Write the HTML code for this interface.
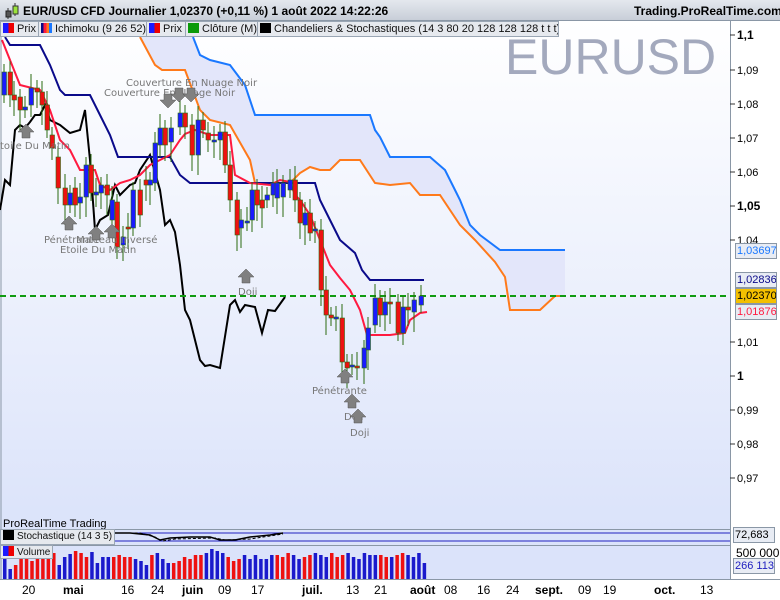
<!DOCTYPE html>
<html><head><meta charset="utf-8"><style>
*{margin:0;padding:0;box-sizing:border-box}
body{width:780px;height:600px;overflow:hidden;background:#fff;font-family:"Liberation Sans",sans-serif;position:relative}
.title{position:absolute;left:0;top:0;width:780px;height:21px;background:linear-gradient(#e4e8ee,#c8ced8);border-bottom:1px solid #8a97a6}
.title b{position:absolute;top:4px;font-size:12px;color:#000}
.leg{position:absolute;top:21px;height:16px;background:#e6e9ee;border:1px solid #9aa6b4;font-size:11px;line-height:14px;padding:0 2px;white-space:nowrap;overflow:hidden;color:#111}
.legs{position:absolute;height:16px;background:#e6e9ee;border:1px solid #9aa6b4;font-size:10px;line-height:14px;padding:0 2px;white-space:nowrap;color:#111}
.sw{display:inline-block;width:11px;height:10px;vertical-align:-1px;margin-right:3px}
.pl{position:absolute;left:735px;width:42px;height:16px;border:1px solid #8a97a6;background:#e8ecf4;font-size:11px;line-height:14px;padding-left:1px;overflow:hidden}
</style></head><body>
<div class="title">
<svg style="position:absolute;left:3px;top:2px" width="16" height="18"><line x1="5" y1="6" x2="5" y2="17" stroke="#333"/><rect x="3" y="9" width="5" height="6" fill="#555" stroke="#222"/><line x1="12" y1="1" x2="12" y2="14" stroke="#333"/><rect x="10" y="4" width="5" height="8" fill="#9be33c" stroke="#333"/></svg>
<b style="left:23px">EUR/USD CFD Journalier 1,02370 (+0,11 %) 1 août 2022 14:22:26</b>
<b style="left:634px">Trading.ProRealTime.com</b>
</div>
<svg style="position:absolute;left:0;top:21px" width="780" height="579">
<defs><linearGradient id="bg" x1="0" y1="0" x2="0" y2="1"><stop offset="0" stop-color="#ffffff"/><stop offset="1" stop-color="#dbe3fa"/></linearGradient></defs>
<rect x="0" y="0" width="730" height="508" fill="url(#bg)"/>
<rect x="0" y="508" width="730" height="50" fill="#dbe3fa"/>
<rect x="0" y="558" width="780" height="21" fill="#fff"/>
<rect x="730" y="0" width="50" height="558" fill="#fff"/>
<line x1="730.5" y1="0" x2="730.5" y2="558" stroke="#8a97a6"/>
<line x1="1" y1="0" x2="1" y2="558" stroke="#8a97a6"/>
<line x1="0" y1="508.5" x2="730" y2="508.5" stroke="#8a97a6"/>
<line x1="0" y1="524.5" x2="730" y2="524.5" stroke="#8a97a6"/>
<line x1="0" y1="558.5" x2="780" y2="558.5" stroke="#8a97a6"/>
<g transform="translate(0,-21)">
<text x="505" y="74" font-size="50" fill="#a3a9bd" font-family="Liberation Sans">EURUSD</text>
<polygon fill="#e3e6fa" points="140,37 155,65 162,70 185,70 200,110 210,120 230,125 250,160 255,183 290,183 300,173 310,167 320,170 330,170 340,160 360,160 375,183 390,185 410,183 420,195 440,195 460,225 475,240 495,262 505,277 510,310 540,310 555,296 565,296 565,250 500,250 480,235 470,225 460,200 455,190 445,170 430,157 390,157 380,137 375,130 370,115 258,115 255,115 245,85 230,65 210,60 200,55 193,37"/>
<polyline fill="none" stroke="#ff7a1a" stroke-width="2" points="140,37 155,65 162,70 185,70 200,110 210,120 230,125 250,160 255,183 290,183 300,173 310,167 320,170 330,170 340,160 360,160 375,183 390,185 410,183 420,195 440,195 460,225 475,240 495,262 505,277 510,310 540,310 555,296 565,296"/>
<polyline fill="none" stroke="#1a78ff" stroke-width="2" points="193,37 200,55 210,60 230,65 245,85 255,115 370,115 375,130 380,137 390,157 430,157 445,170 455,190 460,200 470,225 480,235 500,250 565,250"/>
<polyline fill="none" stroke="#000" stroke-width="2" points="0,210 5,180 10,185 15,130 20,125 25,128 30,122 35,115 40,115 45,105 50,120 60,125 70,133 80,130 85,110 90,160 95,230 100,220 108,215 115,185 120,195 130,185 135,183 140,170 150,155 160,190 165,225 170,220 175,232 180,265 185,310 190,320 200,360 205,366 210,365 220,368 230,305 235,300 240,312 245,305 255,307 262,333 268,310 275,311 285,297"/>
<polyline fill="none" stroke="#0a0a8a" stroke-width="2" points="5,37 10,45 40,45 50,65 60,90 65,95 90,95 100,115 110,135 118,157 170,157 180,175 190,183 315,183 320,200 330,220 340,240 355,253 362,270 370,280 424,280"/>
<polyline fill="none" stroke="#ff1a40" stroke-width="2" points="2,40 20,85 40,90 50,110 60,140 70,150 80,170 95,170 100,185 110,190 120,183 130,180 140,175 150,165 160,160 170,155 180,140 185,134 195,130 210,135 230,135 235,175 250,183 270,185 280,180 290,182 295,195 300,200 310,215 320,240 330,265 340,278 350,290 360,310 367,335 375,335 390,335 405,333 410,320 420,313 427,312"/>
<line x1="0" y1="296" x2="730" y2="296" stroke="#109a10" stroke-width="2" stroke-dasharray="6,4"/>
<g id="candles"></g>
<g fill="#777" font-family="DejaVu Sans,sans-serif" font-size="10">
<text x="126" y="86">Couverture En Nuage Noir</text>
<text x="104" y="96">Couverture En Nuage Noir</text>
<text x="0" y="149">toile Du Matin</text>
<text x="44" y="243">Pénétrante</text>
<text x="76" y="243">Marteau Inversé</text>
<text x="60" y="253">Etoile Du Matin</text>
<text x="238" y="295">Doji</text>
<text x="312" y="394">Pénétrante</text>
<text x="344" y="420">Doji</text>
<text x="350" y="436">Doji</text>
</g>
<g fill="#808080" stroke="#555" stroke-width=".5">
<path d="M60,132 l8,-8 l8,8 h-4 v6 h-8 v-6z" transform="translate(-42,0)"/>
<path d="M60,224 l8,-8 l8,8 h-4 v6 h-8 v-6z" transform="translate(1,0)"/>
<path d="M60,234 l8,-8 l8,8 h-4 v6 h-8 v-6z" transform="translate(28,0)"/>
<path d="M60,224 l8,-8 l8,8 h-4 v6 h-8 v-6z" transform="translate(44,8)"/>
<path d="M60,277 l8,-8 l8,8 h-4 v6 h-8 v-6z" transform="translate(178,0)"/>
<path d="M60,377 l8,-8 l8,8 h-4 v6 h-8 v-6z" transform="translate(277,0)"/>
<path d="M60,402 l8,-8 l8,8 h-4 v6 h-8 v-6z" transform="translate(284,0)"/>
<path d="M60,417 l8,-8 l8,8 h-4 v6 h-8 v-6z" transform="translate(290,0)"/>
<path d="M160,100 l8,8 l8,-8 h-4 v-6 h-8 v6z"/>
<path d="M171,94 l8,8 l8,-8 h-4 v-6 h-8 v6z"/>
<path d="M183,94 l8,8 l8,-8 h-4 v-6 h-8 v6z"/>
</g>
<g font-size="11" fill="#000">
<text x="737" y="39" font-weight="bold" font-size="12">1,1</text>
<text x="737" y="74">1,09</text><text x="737" y="108">1,08</text><text x="737" y="142">1,07</text>
<text x="737" y="176">1,06</text><text x="737" y="210" font-weight="bold" font-size="12">1,05</text>
<text x="737" y="244">1,04</text><text x="737" y="346">1,01</text>
<text x="737" y="380" font-weight="bold" font-size="12">1</text>
<text x="737" y="414">0,99</text><text x="737" y="448">0,98</text><text x="737" y="482">0,97</text>
</g>
<g stroke="#333"><line x1="730" y1="35" x2="735" y2="35"/><line x1="730" y1="70" x2="735" y2="70"/><line x1="730" y1="104" x2="735" y2="104"/><line x1="730" y1="138" x2="735" y2="138"/><line x1="730" y1="172" x2="735" y2="172"/><line x1="730" y1="206" x2="735" y2="206"/><line x1="730" y1="240" x2="735" y2="240"/><line x1="730" y1="342" x2="735" y2="342"/><line x1="730" y1="376" x2="735" y2="376"/><line x1="730" y1="410" x2="735" y2="410"/><line x1="730" y1="444" x2="735" y2="444"/><line x1="730" y1="478" x2="735" y2="478"/></g>
<line x1="84" y1="533" x2="730" y2="533" stroke="#2020c0"/>
<line x1="84" y1="541" x2="730" y2="541" stroke="#2020c0"/>
<polyline fill="none" stroke="#000" stroke-width="1.5" points="86,541 100,535 110,533 130,533 150,535 160,540 170,538 190,537 210,537 220,540 235,540 250,537 270,535 283,533"/>
<polyline fill="none" stroke="#000" stroke-dasharray="3,2" points="86,542 100,537 115,533 140,533 155,537 162,541 175,539 215,538 225,540 250,539 270,536 283,534"/>
<g id="vol"></g>
<g font-size="12" fill="#000">
<text x="736" y="557" font-size="12">500 000</text>
<text x="22" y="594">20</text><text x="63" y="594" font-weight="bold">mai</text><text x="121" y="594">16</text><text x="151" y="594">24</text>
<text x="182" y="594" font-weight="bold">juin</text><text x="218" y="594">09</text><text x="251" y="594">17</text>
<text x="302" y="594" font-weight="bold">juil.</text><text x="346" y="594">13</text><text x="374" y="594">21</text>
<text x="410" y="594" font-weight="bold">août</text><text x="444" y="594">08</text><text x="477" y="594">16</text><text x="506" y="594">24</text>
<text x="535" y="594" font-weight="bold">sept.</text><text x="578" y="594">09</text><text x="603" y="594">19</text>
<text x="654" y="594" font-weight="bold">oct.</text><text x="700" y="594">13</text>
</g>
<text x="3" y="527" font-size="11" fill="#000">ProRealTime Trading</text>
</g>
</svg>
<div class="leg" style="left:0;width:39px"><span class="sw" style="background:linear-gradient(90deg,#1a1aff 50%,#e00 50%)"></span>Prix</div>
<div class="leg" style="left:38px;width:109px"><span class="sw" style="background:linear-gradient(90deg,#0a0a8a 25%,#ff1a40 25%,#ff1a40 50%,#ff7a1a 50%,#ff7a1a 75%,#1a78ff 75%)"></span>Ichimoku (9 26 52)</div>
<div class="leg" style="left:146px;width:40px"><span class="sw" style="background:linear-gradient(90deg,#1a1aff 50%,#e00 50%)"></span>Prix</div>
<div class="leg" style="left:185px;width:73px"><span class="sw" style="background:#0a9a0a"></span>Clôture (M)</div>
<div class="leg" style="left:257px;width:302px"><span class="sw" style="background:#000"></span>Chandeliers &amp; Stochastiques (14 3 80 20 128 128 128 t t t)</div>
<div class="legs" style="left:0;top:529px"><span class="sw" style="background:#000"></span>Stochastique (14 3 5)</div>
<div class="legs" style="left:0;top:545px;height:14px;line-height:12px"><span class="sw" style="background:linear-gradient(90deg,#1a1aff 50%,#e00 50%)"></span>Volume</div>
<div class="pl" style="top:243px;color:#1a78ff">1,03697</div>
<div class="pl" style="top:272px;color:#0a0a8a">1,02836</div>
<div class="pl" style="top:288px;background:#f4c000;color:#000">1,02370</div>
<div class="pl" style="top:304px;color:#ff1a40">1,01876</div>
<div class="pl" style="top:527px;left:733px">72,683</div>
<div class="pl" style="top:558px;left:733px;color:#2020c0">266 113</div>
<script>
var c=[[4,72,95,'b'],[10,72,95,'r'],[14,95,100,'r'],[20,97,110,'r'],[25,107,110,'b'],[31,88,105,'b'],[37,88,92,'r'],[42,92,105,'r'],[47,105,130,'r'],[52,135,148,'r'],[58,157,188,'r'],[65,188,205,'r'],[70,193,205,'b'],[75,188,205,'r'],[80,197,203,'b'],[86,165,197,'b'],[91,165,193,'r'],[96,192,195,'b'],[101,185,193,'b'],[107,185,195,'r'],[112,200,220,'b'],[117,202,247,'r'],[123,237,245,'b'],[128,227,229,'r'],[133,190,228,'b'],[140,190,215,'r'],[146,180,185,'r'],[150,180,185,'b'],[155,143,183,'b'],[160,128,145,'b'],[165,128,145,'r'],[171,128,142,'b'],[180,113,127,'b'],[185,113,127,'r'],[192,125,155,'r'],[198,120,155,'b'],[203,120,130,'r'],[208,133,140,'r'],[214,140,142,'b'],[220,132,140,'b'],[225,132,165,'r'],[230,165,200,'r'],[237,200,235,'r'],[241,220,228,'b'],[247,221,223,'b'],[252,190,220,'b'],[257,190,205,'r'],[262,200,208,'r'],[267,195,200,'b'],[273,183,195,'b'],[277,183,198,'b'],[283,183,197,'b'],[290,180,190,'b'],[295,180,200,'r'],[300,200,223,'r'],[305,213,225,'b'],[310,213,233,'r'],[315,229,231,'b'],[321,230,290,'r'],[326,290,315,'r'],[331,315,318,'r'],[336,317,319,'b'],[342,318,362,'r'],[347,362,368,'r'],[352,365,367,'b'],[357,366,368,'r'],[364,348,368,'b'],[368,328,350,'b'],[375,298,325,'b'],[380,298,315,'r'],[385,302,315,'b'],[390,302,304,'r'],[398,302,333,'r'],[403,307,333,'b'],[408,307,310,'r'],[414,300,312,'b'],[421,296,305,'b']];
var s='';c.forEach(function(d,i){var x=d[0],t=d[1],b=d[2];var h=Math.max(b-t,2);s+='<line x1="'+x+'" y1="'+(t-8-(i%3)*3)+'" x2="'+x+'" y2="'+(b+8+(i%4)*4)+'" stroke="#2a6a10"/><rect x="'+(x-2)+'" y="'+t+'" width="4.5" height="'+h+'" fill="'+(d[3]=='b'?'#1a1aff':'#ee1111')+'" stroke="#2a6a10" stroke-width=".6"/>';});
document.getElementById('candles').innerHTML=s;
var hs=[22,10,14,24,26,18,28,22,24,26,14,22,25,28,26,22,27,16,22,22,22,24,22,22,20,18,14,24,26,20,16,16,18,22,20,24,24,26,30,28,26,22,18,20,24,20,24,20,20,24,24,22,26,24,20,22,24,26,24,22,26,22,24,26,22,20,26,24,24,24,22,22,24,26,24,22,26,16];
var cols='bbrrrrrrrrbbbrrrbbbbrrrrbbbrbbbrrrrrrbbbbrrrbbbbbbrrrbbrrbbbrrrbbbbbbrrbrrbbbb';
var v='';for(var i=0;i<78;i++){var x=3+i*5.45;var h=hs[i];v+='<rect x="'+x+'" y="'+(579-h)+'" width="3.5" height="'+h+'" fill="'+(cols[i]=='b'?'#1a1acc':'#ee1111')+'"/>';}
document.getElementById('vol').innerHTML=v;
</script>
</body></html>
